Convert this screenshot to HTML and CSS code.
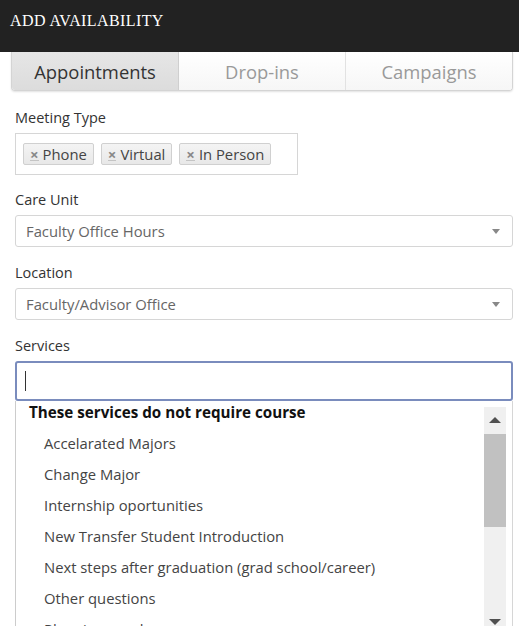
FILE: index.html
```html
<!DOCTYPE html>
<html>
<head>
<meta charset="utf-8">
<link rel="stylesheet" href="styles.css">
</head>
<body>
<header class="topbar"><h1 class="title">ADD AVAILABILITY</h1></header>
<main class="content">
  <nav class="tabs">
    <div class="tab active">Appointments</div>
    <div class="tab">Drop-ins</div>
    <div class="tab">Campaigns</div>
  </nav>

  <div class="field">
    <label class="label">Meeting Type</label>
    <div class="multi">
      <span class="tag"><span class="x">×</span>Phone</span>
      <span class="tag"><span class="x">×</span>Virtual</span>
      <span class="tag"><span class="x">×</span>In Person</span>
    </div>
  </div>

  <div class="field">
    <label class="label">Care Unit</label>
    <div class="select"><span>Faculty Office Hours</span><span class="caret"></span></div>
  </div>

  <div class="field spaced">
    <label class="label">Location</label>
    <div class="select"><span>Faculty/Advisor Office</span><span class="caret"></span></div>
  </div>

  <div class="field spaced">
    <label class="label">Services</label>
    <div class="search"><span class="cursor"></span></div>
    <div class="dropdown">
      <ul class="list">
        <li class="group">These services do not require course</li>
        <li class="item">Accelarated Majors</li>
        <li class="item">Change Major</li>
        <li class="item">Internship oportunities</li>
        <li class="item">New Transfer Student Introduction</li>
        <li class="item">Next steps after graduation (grad school/career)</li>
        <li class="item">Other questions</li>
        <li class="item">Planning my classes</li>
      </ul>
      <div class="scrollbar">
        <span class="arrow up"></span>
        <span class="thumb"></span>
        <span class="arrow down"></span>
      </div>
    </div>
  </div>
</main>
</body>
</html>
```

FILE: styles.css
```css
html, body {
  margin: 0;
  padding: 0;
  background: #fff;
  overflow: hidden;
  height: 626px;
}
body {
  font-family: "Open Sans", "Noto Sans", sans-serif;
  color: #333;
}
.topbar {
  height: 52px;
  background: #222;
  padding: 0 10px;
  box-sizing: border-box;
}
.title {
  margin: 0;
  padding-top: 11px;
  font-family: "Liberation Serif", serif;
  font-weight: normal;
  font-size: 16px;
  line-height: 20px;
  color: #fff;
  letter-spacing: 0.4px;
}
.content {
  padding: 0 6px 0 15px;
}
.tabs {
  display: flex;
  margin-left: -4px;
  height: 38px;
  border: 1px solid #d4d4d4;
  border-top: none;
  border-radius: 0 0 4px 4px;
  box-shadow: 0 1px 2px rgba(0,0,0,0.12);
  overflow: hidden;
}
.tab {
  flex: 1;
  display: flex;
  align-items: center;
  justify-content: center;
  font-size: 18.4px;
  color: #999;
  background: linear-gradient(#fff, #f6f6f6);
  border-left: 1px solid #e2e2e2;
}
.tab:first-child { border-left: none; }
.tab.active {
  color: #333;
  background: linear-gradient(#e6e6e6, #dcdcdc);
  border-right: 1px solid #cfcfcf;
}
.tab.active + .tab { border-left: none; }
.field {
  margin-top: 17px;
}
.field + .field { margin-top: 15px; }
.field + .field.spaced { margin-top: 16px; }
.label {
  display: block;
  font-size: 14.5px;
  line-height: 20px;
  color: #333;
  margin-bottom: 5px;
}
.multi {
  width: 283px;
  height: 42px;
  box-sizing: border-box;
  border: 1px solid #d6d6d6;
  padding: 9px 7px;
  display: flex;
  gap: 7px;
}
.tag {
  height: 22px;
  box-sizing: border-box;
  display: inline-flex;
  align-items: center;
  padding: 0 6px;
  border: 1px solid #d0d0d0;
  border-radius: 2px;
  background: linear-gradient(#f4f4f4, #e8e8e8);
  font-size: 14.8px;
  color: #444;
}
.x {
  font-weight: bold;
  color: #888;
  font-size: 15px;
  margin-right: 4px;
  border-bottom: 1px solid #c4c4c4;
  line-height: 12px;
}
.select {
  height: 32px;
  box-sizing: border-box;
  border: 1px solid #d6d6d6;
  border-radius: 3px;
  display: flex;
  align-items: center;
  justify-content: space-between;
  padding: 0 12px 0 10px;
  font-size: 14.8px;
  color: #666;
}
.caret {
  width: 0;
  height: 0;
  border-left: 4px solid transparent;
  border-right: 4px solid transparent;
  border-top: 5px solid #888;
}
.search {
  height: 40px;
  box-sizing: border-box;
  border: 2px solid #7a8cbd;
  border-radius: 3px;
  display: flex;
  align-items: center;
  padding-left: 8px;
}
.cursor {
  width: 1px;
  height: 20px;
  background: #333;
}
.dropdown {
  display: flex;
  height: 240px;
  border-left: 1px solid #ccc;
  border-right: 1px solid #d6d6d6;
}
.list {
  list-style: none;
  margin: 0;
  padding: 0;
  flex: 1;
}
.group {
  font-weight: bold;
  font-size: 15.2px;
  line-height: 20px;
  padding: 1px 0 0 13px;
  color: #111;
}
.item {
  font-size: 14.8px;
  line-height: 20px;
  padding-left: 28px;
  margin-top: 11px;
  color: #444;
}
.scrollbar {
  width: 22px;
  margin: 6px 6px 0 0;
  background: #f0f0f0;
  display: flex;
  flex-direction: column;
  align-items: center;
  height: 226px;
}
.arrow {
  width: 0;
  height: 0;
  border-left: 6px solid transparent;
  border-right: 6px solid transparent;
}
.arrow.up {
  border-bottom: 6px solid #505050;
  margin-top: 10px;
}
.arrow.down {
  border-top: 6px solid #505050;
  margin-top: auto;
  margin-bottom: 8px;
}
.thumb {
  width: 22px;
  height: 93px;
  background: #c1c1c1;
  margin-top: 11px;
}
```
